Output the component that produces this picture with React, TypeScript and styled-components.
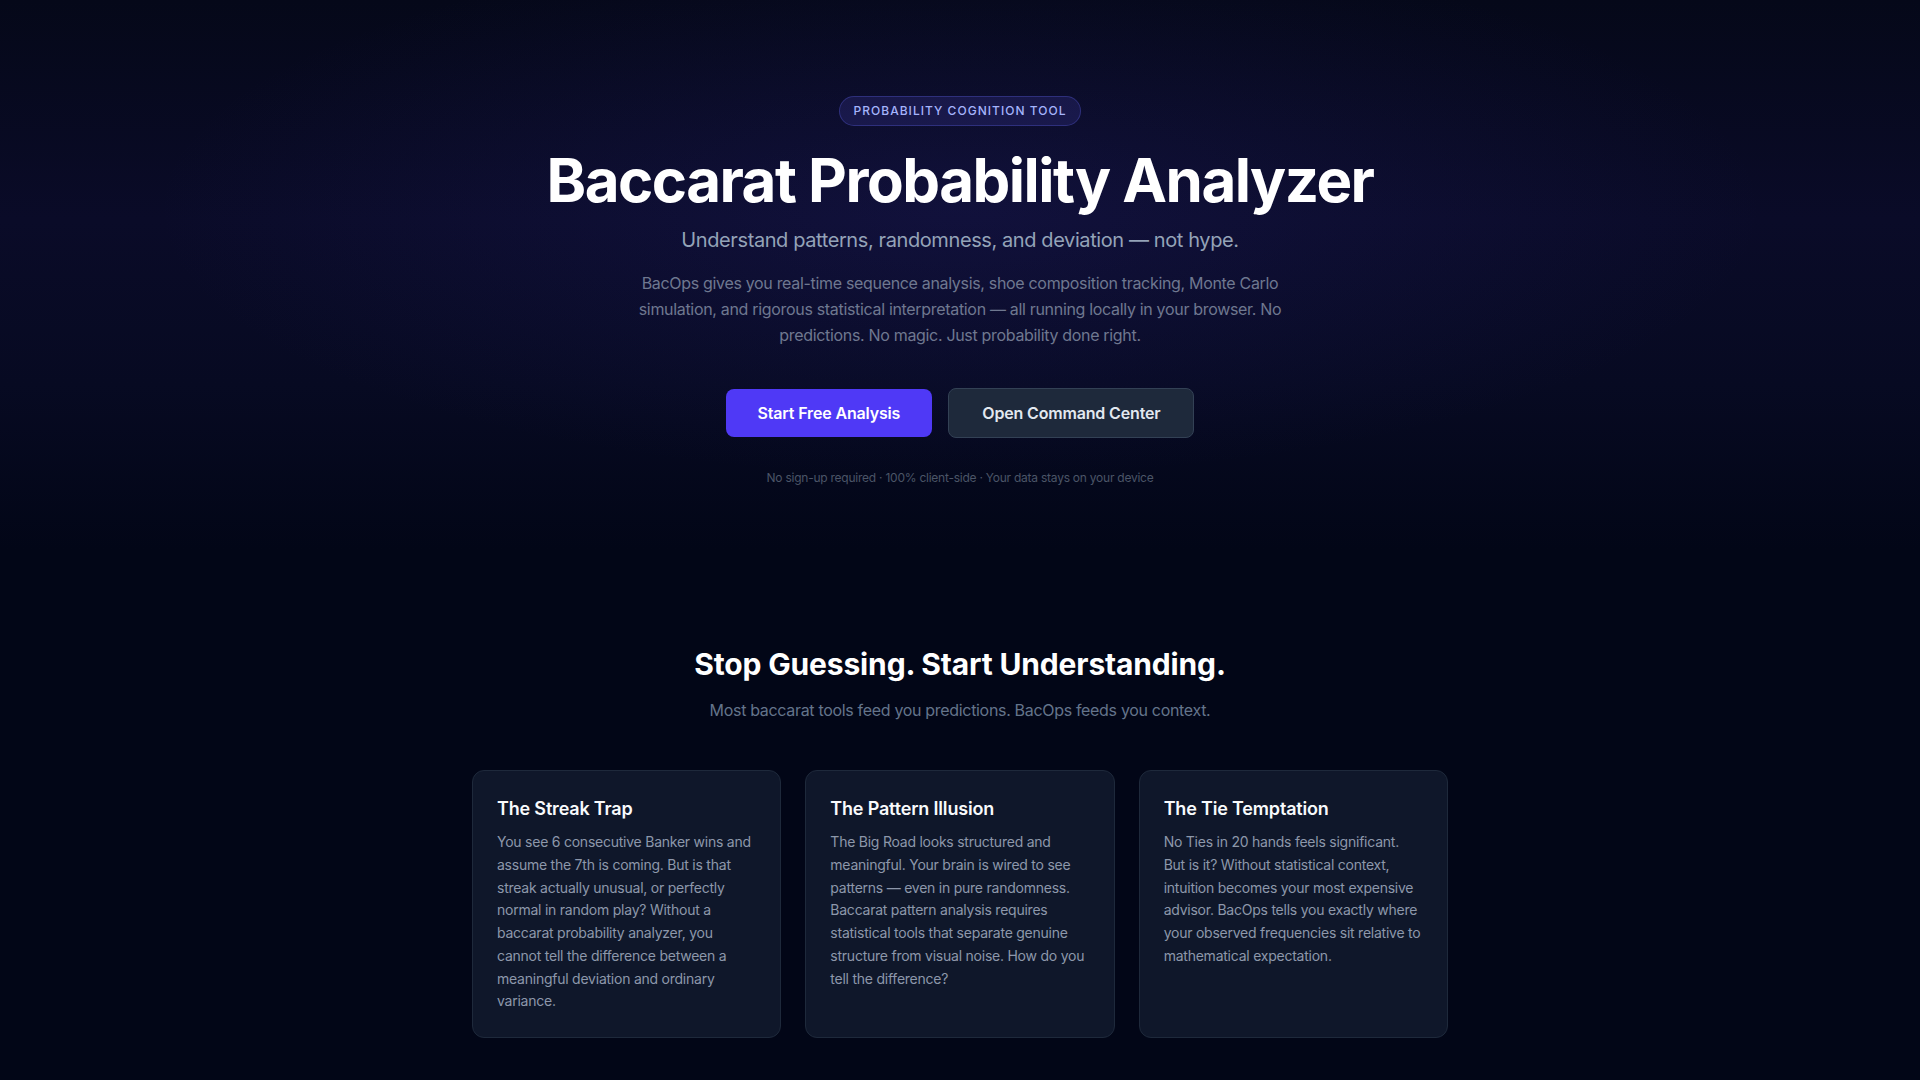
import React from 'react';
import styled, { createGlobalStyle } from 'styled-components';

const GlobalStyle = createGlobalStyle`
  * {
    box-sizing: border-box;
  }
  html,
  body {
    margin: 0;
    padding: 0;
    background: #020617;
  }
  body {
    font-family: Inter, 'Noto Sans', 'Liberation Sans', sans-serif;
    color: #e2e8f0;
    -webkit-font-smoothing: antialiased;
  }
`;

const Page = styled.main`
  min-height: 100vh;
  background: #020617;
`;

const Hero = styled.section`
  padding: 96px 24px 64px;
  text-align: center;
  background:
    radial-gradient(ellipse 60% 70% at 50% 38%, rgba(55, 48, 163, 0.16), transparent 70%),
    linear-gradient(to bottom, #050819 0%, #0a0b28 40%, #070a22 70%, #020617 100%);
`;

const HeroInner = styled.div`
  max-width: 896px;
  margin: 0 auto;
  display: flex;
  flex-direction: column;
  align-items: center;
`;

const Badge = styled.span`
  display: inline-block;
  padding: 6px 14px;
  border-radius: 999px;
  border: 1px solid rgba(99, 102, 241, 0.3);
  background: rgba(49, 46, 129, 0.35);
  color: #a5b4fc;
  font-size: 12px;
  line-height: 16px;
  font-weight: 500;
  letter-spacing: 0.085em;
  text-transform: uppercase;
`;

const Title = styled.h1`
  margin: 24px 0 0;
  font-size: 60px;
  line-height: 60px;
  font-weight: 700;
  letter-spacing: -0.025em;
  color: #ffffff;
`;

const Lead = styled.p`
  margin: 16px 0 0;
  font-size: 20px;
  line-height: 28px;
  letter-spacing: -0.02em;
  color: #94a3b8;
`;

const Body = styled.p`
  margin: 16px 0 0;
  max-width: 672px;
  font-size: 16px;
  line-height: 26px;
  letter-spacing: -0.02em;
  color: #6f7890;
`;

const Actions = styled.div`
  margin-top: 40px;
  display: flex;
  gap: 16px;
  align-items: center;
  justify-content: center;
`;

const Button = styled.a<{ $variant?: 'primary' | 'secondary' }>`
  display: inline-flex;
  align-items: center;
  justify-content: center;
  height: ${(p) => (p.$variant === 'secondary' ? '50px' : '48px')};
  padding: 0 ${(p) => (p.$variant === 'secondary' ? '33px' : '32px')};
  border-radius: 8px;
  font-size: 16px;
  font-weight: 600;
  letter-spacing: -0.01em;
  text-decoration: none;
  cursor: pointer;
  color: ${(p) => (p.$variant === 'secondary' ? '#e2e8f0' : '#ffffff')};
  background: ${(p) => (p.$variant === 'secondary' ? '#1e293b' : '#4f39f6')};
  border: ${(p) => (p.$variant === 'secondary' ? '1px solid #334155' : 'none')};
`;

const Fine = styled.p`
  margin: 32px 0 0;
  font-size: 12px;
  line-height: 16px;
  letter-spacing: -0.02em;
  color: #4b5567;
`;

const Section = styled.section`
  padding: 96px 24px 64px;
  text-align: center;
`;

const SectionInner = styled.div`
  max-width: 976px;
  margin: 0 auto;
`;

const SectionTitle = styled.h2`
  margin: 0;
  font-size: 30px;
  line-height: 36px;
  font-weight: 700;
  letter-spacing: -0.005em;
  color: #ffffff;
`;

const SectionLead = styled.p`
  margin: 16px 0 0;
  font-size: 16px;
  line-height: 24px;
  letter-spacing: -0.02em;
  color: #64748b;
`;

const CardGrid = styled.div`
  margin-top: 48px;
  display: grid;
  grid-template-columns: repeat(3, 1fr);
  gap: 24px;
  text-align: left;
`;

const Card = styled.article`
  padding: 24px;
  border-radius: 12px;
  border: 1px solid #1e293b;
  background: #0f172a;
`;

const CardTitle = styled.h3`
  margin: 0;
  font-size: 18px;
  line-height: 28px;
  font-weight: 600;
  letter-spacing: -0.01em;
  color: #f8fafc;
`;

const CardText = styled.p`
  margin: 8px 0 0;
  font-size: 14px;
  line-height: 22.75px;
  letter-spacing: -0.017em;
  color: #8d97aa;
`;

const problems = [
  {
    title: 'The Streak Trap',
    text: 'You see 6 consecutive Banker wins and assume the 7th is coming. But is that streak actually unusual, or perfectly normal in random play? Without a baccarat probability analyzer, you cannot tell the difference between a meaningful deviation and ordinary variance.',
  },
  {
    title: 'The Pattern Illusion',
    text: 'The Big Road looks structured and meaningful. Your brain is wired to see patterns — even in pure randomness. Baccarat pattern analysis requires statistical tools that separate genuine structure from visual noise. How do you tell the difference?',
  },
  {
    title: 'The Tie Temptation',
    text: 'No Ties in 20 hands feels significant. But is it? Without statistical context, intuition becomes your most expensive advisor. BacOps tells you exactly where your observed frequencies sit relative to mathematical expectation.',
  },
];

const App = () => {
  return (
    <>
      <GlobalStyle />
      <Page>
        <Hero>
          <HeroInner>
            <Badge>Probability Cognition Tool</Badge>
            <Title>Baccarat Probability Analyzer</Title>
            <Lead>Understand patterns, randomness, and deviation — not hype.</Lead>
            <Body>
              BacOps gives you real-time sequence analysis, shoe composition tracking, Monte Carlo
              simulation, and rigorous statistical interpretation — all running locally in your
              browser. No predictions. No magic. Just probability done right.
            </Body>
            <Actions>
              <Button $variant="primary">Start Free Analysis</Button>
              <Button $variant="secondary">Open Command Center</Button>
            </Actions>
            <Fine>No sign-up required · 100% client-side · Your data stays on your device</Fine>
          </HeroInner>
        </Hero>

        <Section>
          <SectionInner>
            <SectionTitle>Stop Guessing. Start Understanding.</SectionTitle>
            <SectionLead>Most baccarat tools feed you predictions. BacOps feeds you context.</SectionLead>
            <CardGrid>
              {problems.map((p) => (
                <Card key={p.title}>
                  <CardTitle>{p.title}</CardTitle>
                  <CardText>{p.text}</CardText>
                </Card>
              ))}
            </CardGrid>
          </SectionInner>
        </Section>
      </Page>
    </>
  );
};

export default App;
